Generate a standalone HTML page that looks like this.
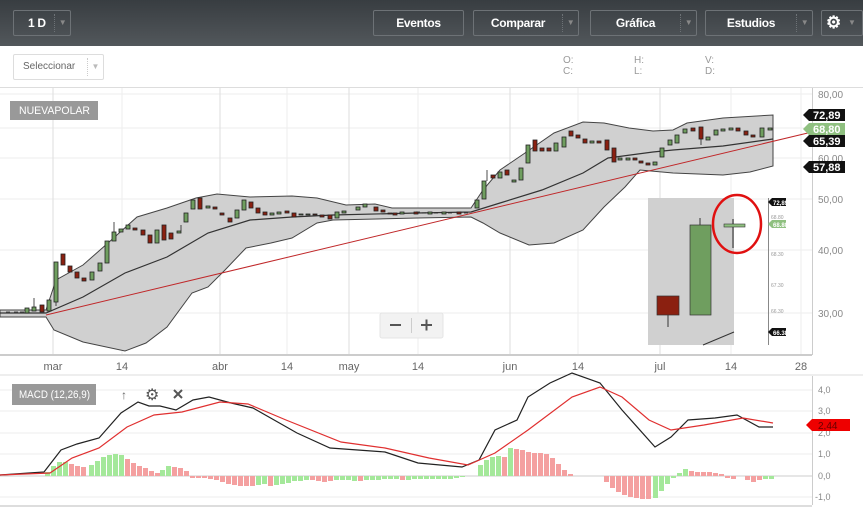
<!DOCTYPE html>
<html><head><meta charset="utf-8"><style>
*{margin:0;padding:0;box-sizing:border-box}
body{width:863px;height:509px;overflow:hidden;background:#fff;font-family:"Liberation Sans",sans-serif;position:relative}
.hdr{position:absolute;left:0;top:0;width:863px;height:46px;background:linear-gradient(#383d41,#52575b)}
.b{position:absolute;top:10px;height:26px;border:1px solid #6d7276;border-radius:2px;color:#fff;font-weight:bold;font-size:12px;line-height:24px;text-align:center;letter-spacing:-0.3px}
.dd{position:absolute;top:3px;bottom:3px;right:0;width:16px;border-left:1px dotted #6d7276;color:#888;font-size:8px;line-height:18px;text-align:center}
.s{position:absolute;font-size:10px;color:#999}
</style></head><body>
<div class="hdr">
<div class="b" style="left:13px;width:58px;text-align:left;padding-left:14px">1 D<span class="dd">▼</span></div>
<div class="b" style="left:373px;width:91px">Eventos</div>
<div class="b" style="left:473px;width:106px;padding-right:16px">Comparar<span class="dd">▼</span></div>
<div class="b" style="left:590px;width:107px;padding-right:16px">Gráfica<span class="dd">▼</span></div>
<div class="b" style="left:705px;width:108px;padding-right:16px">Estudios<span class="dd">▼</span></div>
<div class="b" style="left:821px;width:42px;text-align:left;padding-left:4px;font-size:17px">⚙<span style="position:absolute;left:26px;top:0;font-size:8px;color:#888">▼</span></div>
</div>
<div style="position:absolute;left:13px;top:54px;width:91px;height:26px;border:1px solid #ddd;border-radius:2px;font-size:10px;color:#666;line-height:24px;padding-left:9px">Seleccionar<span style="position:absolute;right:0;top:3px;bottom:3px;width:16px;border-left:1px dotted #ccc;color:#bbb;font-size:8px;line-height:18px;text-align:center">▼</span></div>
<div class="s" style="left:563px;top:55px;line-height:11px">O:<br>C:</div>
<div class="s" style="left:634px;top:55px;line-height:11px">H:<br>L:</div>
<div class="s" style="left:705px;top:55px;line-height:11px">V:<br>D:</div>

<svg width="863" height="509" style="position:absolute;left:0;top:0" font-family="Liberation Sans, sans-serif">
<line x1="0" y1="87.5" x2="863" y2="87.5" stroke="#ddd"/>
<g stroke="#eee">
<line x1="0" y1="94" x2="812" y2="94"/><line x1="0" y1="128" x2="812" y2="128"/><line x1="0" y1="158" x2="812" y2="158"/><line x1="0" y1="199" x2="812" y2="199"/><line x1="0" y1="250" x2="812" y2="250"/><line x1="0" y1="313" x2="812" y2="313"/>
<line x1="122" y1="88" x2="122" y2="355"/><line x1="287" y1="88" x2="287" y2="355"/><line x1="418" y1="88" x2="418" y2="355"/><line x1="578" y1="88" x2="578" y2="355"/><line x1="731" y1="88" x2="731" y2="355"/><line x1="801" y1="88" x2="801" y2="355"/>
</g>
<g stroke="#ddd"><line x1="53" y1="88" x2="53" y2="355"/><line x1="220" y1="88" x2="220" y2="355"/><line x1="349" y1="88" x2="349" y2="355"/><line x1="510" y1="88" x2="510" y2="355"/><line x1="660" y1="88" x2="660" y2="355"/></g>
<line x1="0" y1="355" x2="812" y2="355" stroke="#ccc" stroke-width="2"/>
<line x1="812.5" y1="88" x2="812.5" y2="355" stroke="#ccc"/>
<g font-size="11" fill="#666" text-anchor="middle"><text x="53" y="370">mar</text><text x="122" y="370">14</text><text x="220" y="370">abr</text><text x="287" y="370">14</text><text x="349" y="370">may</text><text x="418" y="370">14</text><text x="510" y="370">jun</text><text x="578" y="370">14</text><text x="660" y="370">jul</text><text x="731" y="370">14</text><text x="801" y="370">28</text></g>
<g font-size="10" fill="#888"><text x="818" y="98">80,00</text><text x="818" y="162">60,00</text><text x="818" y="203">50,00</text><text x="818" y="254">40,00</text><text x="818" y="317">30,00</text></g>
<path d="M0,310 L46,310 56,280 83,265 108,243 137,217 167,208 196,198 217,194 250,197 292,196 317,198 346,205 375,204 392,208 417,208 471,208 483,190 500,170 525,153 554,133 583,122 604,123 629,128 653,131 673,130 687,123 723,118 773,115 L773,166 750,172 723,175 673,173 640,170 625,187 604,207 583,230 554,243 529,245 500,233 483,223 471,217 417,218 333,220 317,223 292,238 271,243 246,248 225,270 208,287 192,293 167,327 146,343 125,351 83,342 54,330 46,317 0,317Z" fill="#d0d0d0" stroke="#444" stroke-width="1"/>
<path d="M0,313 L46,313 83,297 125,273 167,257 208,233 250,220 292,217 333,215 417,213 471,212 500,203 542,190 583,173 608,158 653,152 673,150 723,146 773,139" fill="none" stroke="#333" stroke-width="1.2"/>
<line x1="46" y1="315" x2="812" y2="132" stroke="#c0282a" stroke-width="1"/>
<g stroke="#222" stroke-width="0.8">
<g fill="#6f9e5f">
<rect x="25" y="308" width="4" height="5"/><rect x="32" y="307" width="4" height="4"/><rect x="47" y="300" width="4" height="11"/><rect x="54" y="262" width="4" height="40"/><rect x="90" y="272" width="4" height="8"/><rect x="98" y="263" width="4" height="8"/><rect x="105" y="241" width="4" height="22"/><rect x="112" y="232" width="4" height="9"/><rect x="119" y="229" width="4" height="3"/><rect x="126" y="225" width="4" height="4"/><rect x="155" y="230" width="4" height="13"/><rect x="177" y="231" width="4" height="2"/><rect x="184" y="213" width="4" height="9"/><rect x="191" y="200" width="4" height="9"/><rect x="206" y="206" width="4" height="2"/><rect x="235" y="210" width="4" height="8"/><rect x="242" y="200" width="4" height="10"/><rect x="270" y="213" width="4" height="2"/><rect x="277" y="212" width="4" height="2"/><rect x="299" y="214" width="4" height="1"/><rect x="306" y="214" width="4" height="1"/><rect x="335" y="212" width="4" height="6"/><rect x="342" y="211" width="4" height="2"/><rect x="356" y="207" width="4" height="3"/><rect x="363" y="204" width="4" height="3"/><rect x="400" y="212" width="4" height="2"/><rect x="428" y="212" width="4" height="2"/><rect x="442" y="212" width="4" height="2"/><rect x="475" y="200" width="4" height="8"/><rect x="482" y="181" width="4" height="18"/><rect x="498" y="172" width="4" height="6"/><rect x="512" y="180" width="4" height="2"/><rect x="519" y="168" width="4" height="12"/><rect x="526" y="145" width="4" height="18"/><rect x="554" y="143" width="4" height="8"/><rect x="562" y="137" width="4" height="10"/><rect x="590" y="141" width="4" height="2"/><rect x="618" y="158" width="4" height="2"/><rect x="626" y="158" width="4" height="2"/><rect x="653" y="162" width="4" height="3"/><rect x="660" y="148" width="4" height="9"/><rect x="668" y="140" width="4" height="5"/><rect x="675" y="135" width="4" height="8"/><rect x="683" y="129" width="4" height="4"/><rect x="706" y="137" width="4" height="3"/><rect x="714" y="130" width="4" height="5"/><rect x="721" y="129" width="4" height="2"/><rect x="729" y="128" width="4" height="2"/><rect x="760" y="128" width="4" height="9"/><rect x="768" y="128" width="4" height="2"/>
</g>
<g fill="#8b2010">
<rect x="40" y="305" width="4" height="7"/><rect x="61" y="254" width="4" height="11"/><rect x="68" y="266" width="4" height="6"/><rect x="75" y="272" width="4" height="6"/><rect x="82" y="278" width="4" height="3"/><rect x="133" y="228" width="4" height="2"/><rect x="141" y="230" width="4" height="5"/><rect x="148" y="235" width="4" height="8"/><rect x="162" y="225" width="4" height="15"/><rect x="169" y="233" width="4" height="6"/><rect x="198" y="198" width="4" height="11"/><rect x="213" y="207" width="4" height="2"/><rect x="220" y="213" width="4" height="2"/><rect x="228" y="218" width="4" height="4"/><rect x="249" y="202" width="4" height="6"/><rect x="256" y="208" width="4" height="5"/><rect x="263" y="212" width="4" height="3"/><rect x="285" y="211" width="4" height="2"/><rect x="292" y="213" width="4" height="4"/><rect x="313" y="214" width="4" height="1"/><rect x="320" y="215" width="4" height="2"/><rect x="328" y="215" width="4" height="4"/><rect x="374" y="207" width="4" height="4"/><rect x="381" y="210" width="4" height="2"/><rect x="388" y="213" width="4" height="1"/><rect x="393" y="213" width="4" height="2"/><rect x="414" y="212" width="4" height="2"/><rect x="457" y="212" width="4" height="2"/><rect x="491" y="175" width="4" height="3"/><rect x="505" y="170" width="4" height="5"/><rect x="533" y="140" width="4" height="11"/><rect x="540" y="148" width="4" height="3"/><rect x="547" y="148" width="4" height="3"/><rect x="569" y="131" width="4" height="5"/><rect x="576" y="135" width="4" height="3"/><rect x="583" y="139" width="4" height="4"/><rect x="597" y="141" width="4" height="2"/><rect x="605" y="140" width="4" height="10"/><rect x="612" y="148" width="4" height="14"/><rect x="633" y="158" width="4" height="2"/><rect x="639" y="161" width="4" height="2"/><rect x="646" y="163" width="4" height="2"/><rect x="691" y="128" width="4" height="3"/><rect x="699" y="127" width="4" height="12"/><rect x="736" y="128" width="4" height="3"/><rect x="744" y="131" width="4" height="4"/><rect x="751" y="135" width="4" height="2"/>
</g>
<path d="M34,298V307M114,222V232M181,225V231M487,170V181M701,139V145M56,302V306M6,312H10M14,312H18M20,312H24M416,212H420M422,213H426M434,213H438M448,213H452M464,213H468" fill="none"/>
</g>
<rect x="648" y="198" width="86" height="147" fill="#d0d0d0"/>
<line x1="768.5" y1="198" x2="768.5" y2="345" stroke="#888"/>
<rect x="657" y="296" width="22" height="19" fill="#8b2010" stroke="#333" stroke-width="0.7"/>
<line x1="668" y1="315" x2="668" y2="327" stroke="#333"/>
<rect x="690" y="225" width="21" height="90" fill="#6f9e5f" stroke="#333" stroke-width="0.7"/>
<line x1="700" y1="218" x2="700" y2="225" stroke="#333"/>
<line x1="733" y1="219" x2="733" y2="248" stroke="#222"/>
<rect x="724" y="224" width="21" height="3" fill="#8fc080" stroke="#333" stroke-width="0.6"/>
<ellipse cx="737" cy="224" rx="24" ry="29" fill="none" stroke="#e01010" stroke-width="2.5"/>
<line x1="703" y1="345" x2="734" y2="332" stroke="#333"/>
<g font-size="5" fill="#999"><text x="771" y="219">68.80</text><text x="771" y="256">68.30</text><text x="771" y="287">67.30</text><text x="771" y="313">66.30</text></g>
<path d="M768,202 l4,-4 h14 v8 h-14z" fill="#111"/><text x="773" y="205" font-size="6" fill="#fff" font-weight="bold">72,89</text>
<path d="M768,224 l4,-4 h14 v8 h-14z" fill="#8fc080"/><text x="773" y="227" font-size="6" fill="#fff" font-weight="bold">68.80</text>
<path d="M768,332 l4,-4 h14 v8 h-14z" fill="#111"/><text x="773" y="335" font-size="6" fill="#fff" font-weight="bold">66.38</text>
<path d="M803,115 l6,-6 h36 v12 h-36z" fill="#111"/><text x="813" y="119" font-size="11" fill="#fff" font-weight="bold">72,89</text>
<path d="M803,129 l6,-6 h36 v12 h-36z" fill="#8fc080"/><text x="813" y="133" font-size="11" fill="#fff" font-weight="bold">68,80</text>
<path d="M803,141 l6,-6 h36 v12 h-36z" fill="#111"/><text x="813" y="145" font-size="11" fill="#fff" font-weight="bold">65,39</text>
<path d="M803,167 l6,-6 h36 v12 h-36z" fill="#111"/><text x="813" y="171" font-size="11" fill="#fff" font-weight="bold">57,88</text>
<rect x="10" y="101" width="88" height="19" fill="#999"/><text x="19" y="114" font-size="11" fill="#fff" textLength="71" lengthAdjust="spacingAndGlyphs">NUEVAPOLAR</text>
<rect x="380" y="313" width="63" height="25" rx="2" fill="#f2f2f2" stroke="#e4e4e4"/>
<line x1="411.5" y1="318" x2="411.5" y2="333" stroke="#ccc"/>
<path d="M390,325h11M421,325h11M426.5,319.5v11" stroke="#555" stroke-width="2"/>
<line x1="0" y1="375" x2="863" y2="375" stroke="#ddd"/>
<g stroke="#eee"><line x1="0" y1="390" x2="812" y2="390"/><line x1="0" y1="411" x2="812" y2="411"/><line x1="0" y1="433" x2="812" y2="433"/><line x1="0" y1="454" x2="812" y2="454"/><line x1="0" y1="497" x2="812" y2="497"/></g>
<line x1="0" y1="476" x2="812" y2="476" stroke="#ccc"/>
<line x1="812.5" y1="376" x2="812.5" y2="505" stroke="#ccc"/>
<line x1="0" y1="506" x2="812" y2="506" stroke="#ddd" stroke-width="2"/>
<g font-size="9" fill="#888"><text x="818" y="393">4,0</text><text x="818" y="414">3,0</text><text x="818" y="436">2,0</text><text x="818" y="457">1,0</text><text x="818" y="479">0,0</text><text x="815" y="500">-1,0</text></g>
<g fill="#a4e89a">
<rect x="45" y="472" width="5" height="4"/><rect x="51" y="466" width="5" height="10"/><rect x="57" y="462" width="5" height="14"/><rect x="63" y="462" width="5" height="14"/><rect x="89" y="465" width="5" height="11"/><rect x="95" y="461" width="5" height="15"/><rect x="101" y="457" width="5" height="19"/><rect x="107" y="455" width="5" height="21"/><rect x="113" y="454" width="5" height="22"/><rect x="119" y="455" width="5" height="21"/><rect x="160" y="470" width="5" height="6"/><rect x="166" y="466" width="5" height="10"/>
<rect x="256" y="476" width="5" height="9"/><rect x="262" y="476" width="5" height="8"/><rect x="274" y="476" width="5" height="9"/><rect x="280" y="476" width="5" height="8"/><rect x="286" y="476" width="5" height="7"/><rect x="292" y="476" width="5" height="5"/><rect x="298" y="476" width="5" height="5"/><rect x="304" y="476" width="5" height="4"/><rect x="334" y="476" width="5" height="4"/><rect x="340" y="476" width="5" height="4"/><rect x="346" y="476" width="5" height="4"/><rect x="352" y="476" width="5" height="5"/><rect x="364" y="476" width="5" height="4"/><rect x="370" y="476" width="5" height="4"/><rect x="376" y="476" width="5" height="4"/><rect x="382" y="476" width="5" height="3"/><rect x="388" y="476" width="5" height="3"/><rect x="394" y="476" width="5" height="3"/><rect x="406" y="476" width="5" height="4"/><rect x="412" y="476" width="5" height="3"/><rect x="418" y="476" width="5" height="3"/><rect x="424" y="476" width="5" height="3"/><rect x="430" y="476" width="5" height="3"/><rect x="436" y="476" width="5" height="3"/><rect x="442" y="476" width="5" height="3"/><rect x="448" y="476" width="5" height="3"/><rect x="454" y="476" width="5" height="2"/><rect x="460" y="476" width="5" height="1"/>
<rect x="478" y="465" width="5" height="11"/><rect x="484" y="460" width="5" height="16"/><rect x="490" y="457" width="5" height="19"/><rect x="496" y="456" width="5" height="20"/><rect x="508" y="448" width="5" height="28"/>
<rect x="653" y="476" width="5" height="22"/><rect x="659" y="476" width="5" height="15"/><rect x="665" y="476" width="5" height="8"/><rect x="671" y="476" width="5" height="2"/><rect x="677" y="473" width="5" height="3"/><rect x="683" y="469" width="5" height="7"/><rect x="763" y="476" width="5" height="3"/><rect x="769" y="476" width="5" height="3"/>
</g>
<g fill="#f4a0a0">
<rect x="69" y="464" width="5" height="12"/><rect x="75" y="466" width="5" height="10"/><rect x="81" y="467" width="5" height="9"/><rect x="125" y="459" width="5" height="17"/><rect x="131" y="463" width="5" height="13"/><rect x="137" y="466" width="5" height="10"/><rect x="143" y="468" width="5" height="8"/><rect x="149" y="471" width="5" height="5"/><rect x="155" y="473" width="5" height="3"/><rect x="172" y="467" width="5" height="9"/><rect x="178" y="468" width="5" height="8"/><rect x="184" y="471" width="5" height="5"/>
<rect x="190" y="476" width="5" height="2"/><rect x="196" y="476" width="5" height="2"/><rect x="202" y="476" width="5" height="2"/><rect x="208" y="476" width="5" height="3"/><rect x="214" y="476" width="5" height="4"/><rect x="220" y="476" width="5" height="6"/><rect x="226" y="476" width="5" height="8"/><rect x="232" y="476" width="5" height="9"/><rect x="238" y="476" width="5" height="10"/><rect x="244" y="476" width="5" height="10"/><rect x="250" y="476" width="5" height="10"/><rect x="268" y="476" width="5" height="10"/><rect x="310" y="476" width="5" height="4"/><rect x="316" y="476" width="5" height="5"/><rect x="322" y="476" width="5" height="6"/><rect x="328" y="476" width="5" height="5"/><rect x="358" y="476" width="5" height="5"/><rect x="400" y="476" width="5" height="4"/>
<rect x="502" y="457" width="5" height="19"/><rect x="514" y="449" width="5" height="27"/><rect x="520" y="450" width="5" height="26"/><rect x="526" y="452" width="5" height="24"/><rect x="532" y="453" width="5" height="23"/><rect x="538" y="453" width="5" height="23"/><rect x="544" y="454" width="5" height="22"/><rect x="550" y="458" width="5" height="18"/><rect x="556" y="464" width="5" height="12"/><rect x="562" y="470" width="5" height="6"/><rect x="568" y="474" width="5" height="2"/><rect x="604" y="476" width="5" height="6"/><rect x="610" y="476" width="5" height="12"/><rect x="616" y="476" width="5" height="16"/><rect x="622" y="476" width="5" height="19"/><rect x="628" y="476" width="5" height="21"/><rect x="634" y="476" width="5" height="22"/><rect x="640" y="476" width="5" height="23"/><rect x="646" y="476" width="5" height="23"/><rect x="689" y="471" width="5" height="5"/><rect x="695" y="472" width="5" height="4"/><rect x="701" y="472" width="5" height="4"/><rect x="707" y="472" width="5" height="4"/><rect x="713" y="473" width="5" height="3"/><rect x="719" y="474" width="5" height="2"/><rect x="725" y="476" width="5" height="2"/><rect x="731" y="476" width="5" height="3"/><rect x="745" y="476" width="5" height="4"/><rect x="751" y="476" width="5" height="6"/><rect x="757" y="476" width="5" height="4"/>
</g>
<path d="M0,475 L44,472 61,450 77,444 99,438 121,413 138,402 149,406 160,406 176,410 193,400 209,397 231,403 253,408 297,433 330,448 385,452 418,463 462,467 479,460 495,430 517,420 528,397 550,383 572,373 600,383 622,410 655,447 671,437 688,420 715,418 737,415 759,427 773,427" fill="none" stroke="#222" stroke-width="1.2"/>
<path d="M0,475 L50,473 72,458 99,448 127,427 154,415 182,412 220,402 248,404 286,420 341,442 385,448 429,458 468,465 495,453 528,430 572,397 600,387 622,397 649,420 671,430 704,425 743,418 773,423" fill="none" stroke="#e03030" stroke-width="1.2"/>
<path d="M806,425 l6,-6 h38 v12 h-38z" fill="#e00"/><text x="818" y="429" font-size="10" fill="#600">2,44</text>
<rect x="12" y="384" width="84" height="21" fill="#999"/><text x="19" y="398" font-size="11" fill="#fff" textLength="71" lengthAdjust="spacingAndGlyphs">MACD (12,26,9)</text>
<text x="121" y="399" font-size="12" fill="#666">↑</text>
<text x="145" y="400" font-size="16" fill="#555">⚙</text>
<path d="M174,390l8,8M182,390l-8,8" stroke="#555" stroke-width="2"/>
</svg>
</body></html>
